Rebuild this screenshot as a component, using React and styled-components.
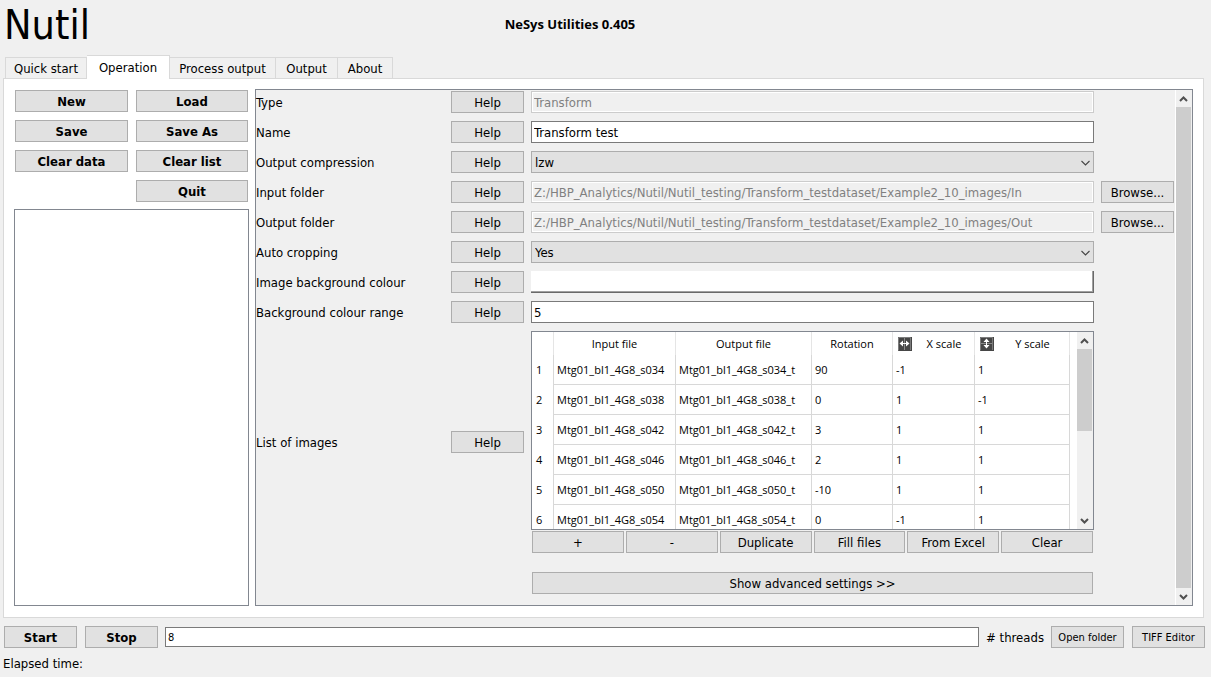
import React from "react";
import styled, { createGlobalStyle, css } from "styled-components";

const ui = `"DejaVu Sans Condensed", "DejaVu Sans", sans-serif`;
const humanist = `"Open Sans", "Noto Sans", sans-serif`;

const GlobalStyle = createGlobalStyle`
  * { box-sizing: border-box; }
  body {
    margin: 0;
    background: #f0f0f0;
    color: #000;
    font: 13px/16px ${ui};
  }
  button, input, select { font: inherit; color: inherit; margin: 0; border-radius: 0; }
`;

const Page = styled.div`
  display: flex;
  flex-direction: column;
  min-height: 100vh;
`;

const Header = styled.header`
  display: grid;
  grid-template-columns: 1fr auto 1fr;
  height: 55px;
  padding: 0 75px 0 4px;
`;

const Brand = styled.h1`
  margin: 0;
  font-size: 41px;
  line-height: 50px;
  font-weight: 400;
`;

const Title = styled.h2`
  margin: 0;
  padding-top: 16px;
  font-family: ${humanist};
  font-size: 13px;
  line-height: 16px;
  font-weight: 700;
`;

const TabBar = styled.nav`
  display: flex;
  align-items: flex-end;
  height: 24px;
  margin-bottom: -1px;
  padding-left: 5px;
  position: relative;
`;

const Tab = styled.button`
  height: 22px;
  width: ${(p) => p.$width}px;
  padding: 2px 0 0;
  border: 1px solid #d9d9d9;
  border-left-width: ${(p) => (p.$first ? 1 : 0)}px;
  background: #f0f0f0;
  ${(p) =>
    p.$active &&
    css`
      height: 24px;
      padding: 0;
      border-bottom: 0;
      background: #fff;
    `}
`;

const Panel = styled.main`
  flex: 1;
  display: flex;
  gap: 6px;
  margin: 0 7px 0 3px;
  padding: 10px 10px 11px;
  border: 1px solid #d9d9d9;
  background: #fff;
`;

const Side = styled.section`
  display: flex;
  flex-direction: column;
  gap: 7px;
  width: 235px;
`;

const ButtonGrid = styled.div`
  display: grid;
  grid-template-columns: 113px 112px;
  gap: 8px;
  padding: 1px 1px 0;
`;

const Button = styled.button`
  height: 22px;
  min-width: 0;
  padding: 2px 0 0;
  border: 1px solid #adadad;
  background: #e1e1e1;
  line-height: 16px;
  font-weight: ${(p) => (p.$bold ? 700 : 400)};
  font-size: ${(p) => (p.$small ? 11 : 13)}px;
  ${(p) => p.$last && "grid-column: 2;"}
`;

const FileList = styled.div`
  flex: 1;
  border: 1px solid #828790;
  background: #fff;
`;

const FormFrame = styled.section`
  flex: 1;
  min-width: 0;
  display: flex;
  border: 1px solid #828790;
  background: #f0f0f0;
`;

const Form = styled.form`
  flex: 1;
  min-width: 0;
  display: flex;
  flex-direction: column;
  gap: 8px;
  padding: 1px 1px 11px 0;
`;

const Row = styled.div`
  display: grid;
  grid-template-columns: 188px 73px minmax(0, 1fr) 73px;
  column-gap: 7px;
  align-items: center;
`;

const label = css`
  padding-top: 2px;
`;

const Label = styled.label`
  ${label}
`;

const Caption = styled.span`
  ${label}
`;

const TextBox = styled.input`
  width: 100%;
  height: 22px;
  padding: 0 2px;
  border: 1px solid #7a7a7a;
  background: #fff;
  outline: 0;
  &:disabled {
    border-color: #ccc;
    background: #f0f0f0;
    box-shadow: inset 0 0 0 1px #fff;
    color: #808080;
  }
`;

const SelectWrap = styled.div`
  position: relative;
  svg { position: absolute; right: 4px; top: 9px; pointer-events: none; }
`;

const Select = styled.select`
  display: block;
  appearance: none;
  width: 100%;
  height: 22px;
  padding: 2px 20px 0 3px;
  border: 1px solid #adadad;
  background: #e1e1e1;
`;

const ColourButton = styled.button`
  width: 100%;
  height: 22px;
  padding: 0;
  background: #fff;
  border: 0;
  border-right: 1px solid #696969;
  border-bottom: 1px solid #696969;
  box-shadow: inset -1px -1px 0 #a0a0a0;
`;

const ListField = styled.div`
  display: flex;
  flex-direction: column;
  gap: 1px;
`;

const TableFrame = styled.div`
  display: flex;
  height: 199px;
  border: 1px solid #828790;
  background: #fff;
  font-family: ${humanist};
  font-size: 11px;
`;

const TableView = styled.div`
  flex: 1;
  min-width: 0;
  overflow: hidden;
  padding-right: 7px;
`;

const Table = styled.table`
  width: 100%;
  table-layout: fixed;
  border-collapse: separate;
  border-spacing: 0;
`;

const HeadCell = styled.th`
  height: 23px;
  padding: 0;
  border-right: 1px solid #e5e5e5;
  font-weight: 400;
`;

const HeadWithIcon = styled.div`
  display: flex;
  align-items: center;
  padding-left: 5px;
  span { flex: 1; padding-left: 2px; }
`;

const RowHead = styled.th`
  height: 30px;
  padding: 0 0 0 4px;
  border-right: 1px solid #d8d8d8;
  font-weight: 400;
  text-align: left;
`;

const Cell = styled.td`
  height: 30px;
  padding: 0 0 0 3px;
  border-right: 1px solid #d8d8d8;
  border-bottom: 1px solid #d8d8d8;
  white-space: nowrap;
`;

const Track = styled.div`
  display: flex;
  flex-direction: column;
  width: ${(p) => (p.$framed ? 17 : 16)}px;
  padding-right: 1px;
  border-left: ${(p) => (p.$framed ? 1 : 0)}px solid #fff;
  background: #f0f0f0;
`;

const Arrow = styled.button`
  display: flex;
  align-items: center;
  justify-content: center;
  height: 17px;
  padding: 0;
  border: 0;
  background: none;
`;

const Thumb = styled.div`
  background: #cdcdcd;
  ${(p) => (p.$length ? `height: ${p.$length}px; margin-bottom: auto;` : "flex: 1;")}
`;

const Actions = styled.div`
  display: grid;
  grid-template-columns: repeat(6, 1fr);
  gap: 2px;
  padding: 0 1px;
`;

const Advanced = styled.div`
  display: grid;
  padding: 11px 1px 0;
  grid-column: 3;
`;

const Footer = styled.footer`
  display: flex;
  align-items: center;
  gap: 7px;
  padding: 8px 6px 0 4px;
`;

const Pair = styled.div`
  display: grid;
  grid-template-columns: 73px 73px;
  gap: 8px;
`;

const Threads = styled(TextBox)`
  flex: 1;
  width: auto;
  height: 20px;
  font-size: 11px;
`;

const Elapsed = styled.p`
  margin: 0;
  padding: 8px 3px 5px;
`;

const Chevron = ({ up, bold }) => (
  <svg width="9" height="6" viewBox="0 0 9 6" fill="none" stroke={bold ? "#505050" : "#444"} strokeWidth={bold ? 2 : 1.1} aria-hidden="true">
    <path d={up ? "M1 5 L4.5 1.5 L8 5" : bold ? "M1 1 L4.5 4.5 L8 1" : "M0.5 1 L4.5 5 L8.5 1"} />
  </svg>
);

const ScaleIcon = ({ vertical }) => (
  <svg width="14" height="14" viewBox="0 0 14 14" aria-hidden="true">
    <rect width="14" height="14" fill="#464646" />
    <path d="M0.5 13.5V0.5H12.5V13" fill="none" stroke="#7c7c7c" />
    <path d={vertical ? "M1 6.5H12" : "M6.5 1V13"} stroke="#8a8a8a" />
    <g transform={vertical ? "rotate(90 6.5 6.5)" : undefined} fill="#fff">
      <path d="M3 6H10V7H3Z" />
      <path d="M1.5 6.5L5 3.5V9.5Z M11.5 6.5L8 3.5V9.5Z" />
    </g>
  </svg>
);

const Scrollbar = ({ framed, length }) => (
  <Track $framed={framed}>
    <Arrow type="button" aria-label="Scroll up"><Chevron up bold /></Arrow>
    <Thumb $length={length} />
    <Arrow type="button" aria-label="Scroll down"><Chevron bold /></Arrow>
  </Track>
);

const Field = ({ id, label, browse, children }) => (
  <Row>
    <Label htmlFor={id}>{label}</Label>
    <Button type="button">Help</Button>
    {children}
    {browse && <Button type="button">Browse...</Button>}
  </Row>
);

const DropDown = ({ id, value }) => (
  <SelectWrap>
    <Select id={id} defaultValue={value}>
      <option>{value}</option>
    </Select>
    <Chevron />
  </SelectWrap>
);

const tabs = [
  ["Quick start", 82],
  ["Operation", 83],
  ["Process output", 106],
  ["Output", 62],
  ["About", 55],
];

const images = [
  ["034", 90, -1, 1],
  ["038", 0, 1, -1],
  ["042", 3, 1, 1],
  ["046", 2, 1, 1],
  ["050", -10, 1, 1],
  ["054", 0, -1, 1],
];

const folder = "Z:/HBP_Analytics/Nutil/Nutil_testing/Transform_testdataset/Example2_10_images/";

export default function App() {
  return (
    <Page>
      <GlobalStyle />
      <Header>
        <Brand>Nutil</Brand>
        <Title>NeSys Utilities 0.405</Title>
      </Header>
      <TabBar>
        {tabs.map(([name, width], i) => (
          <Tab key={name} type="button" $width={width} $first={i === 0} $active={name === "Operation"}>
            {name}
          </Tab>
        ))}
      </TabBar>
      <Panel>
        <Side>
          <ButtonGrid>
            {["New", "Load", "Save", "Save As", "Clear data", "Clear list", "Quit"].map((name) => (
              <Button key={name} type="button" $bold $last={name === "Quit"}>{name}</Button>
            ))}
          </ButtonGrid>
          <FileList />
        </Side>
        <FormFrame>
          <Form>
            <Field id="type" label="Type">
              <TextBox id="type" defaultValue="Transform" disabled />
            </Field>
            <Field id="name" label="Name">
              <TextBox id="name" defaultValue="Transform test" />
            </Field>
            <Field id="compression" label="Output compression">
              <DropDown id="compression" value="lzw" />
            </Field>
            <Field id="input" label="Input folder" browse>
              <TextBox id="input" defaultValue={folder + "In"} disabled />
            </Field>
            <Field id="output" label="Output folder" browse>
              <TextBox id="output" defaultValue={folder + "Out"} disabled />
            </Field>
            <Field id="cropping" label="Auto cropping">
              <DropDown id="cropping" value="Yes" />
            </Field>
            <Field id="colour" label="Image background colour">
              <ColourButton id="colour" type="button" />
            </Field>
            <Field id="range" label="Background colour range">
              <TextBox id="range" defaultValue="5" />
            </Field>
            <Row>
              <Caption>List of images</Caption>
              <Button type="button">Help</Button>
              <ListField>
                <TableFrame>
                  <TableView>
                    <Table aria-label="List of images">
                      <colgroup>
                        {[22, 122, 136, 81, 82, 95].map((w) => <col key={w} width={w} />)}
                      </colgroup>
                      <thead>
                        <tr>
                          <HeadCell />
                          <HeadCell>Input file</HeadCell>
                          <HeadCell>Output file</HeadCell>
                          <HeadCell>Rotation</HeadCell>
                          <HeadCell><HeadWithIcon><ScaleIcon /><span>X scale</span></HeadWithIcon></HeadCell>
                          <HeadCell><HeadWithIcon><ScaleIcon vertical /><span>Y scale</span></HeadWithIcon></HeadCell>
                        </tr>
                      </thead>
                      <tbody>
                        {images.map(([n, rotation, x, y], i) => (
                          <tr key={n}>
                            <RowHead scope="row">{i + 1}</RowHead>
                            <Cell>Mtg01_bl1_4G8_s{n}</Cell>
                            <Cell>Mtg01_bl1_4G8_s{n}_t</Cell>
                            <Cell>{rotation}</Cell>
                            <Cell>{x}</Cell>
                            <Cell>{y}</Cell>
                          </tr>
                        ))}
                      </tbody>
                    </Table>
                  </TableView>
                  <Scrollbar length={82} />
                </TableFrame>
                <Actions>
                  {["+", "-", "Duplicate", "Fill files", "From Excel", "Clear"].map((name) => (
                    <Button key={name} type="button">{name}</Button>
                  ))}
                </Actions>
              </ListField>
            </Row>
            <Row>
              <Advanced>
                <Button type="button">Show advanced settings &gt;&gt;</Button>
              </Advanced>
            </Row>
          </Form>
          <Scrollbar framed />
        </FormFrame>
      </Panel>
      <Footer>
        <Pair>
          <Button type="button" $bold>Start</Button>
          <Button type="button" $bold>Stop</Button>
        </Pair>
        <Threads id="threads" defaultValue="8" />
        <Label htmlFor="threads"># threads</Label>
        <Pair>
          <Button type="button" $small>Open folder</Button>
          <Button type="button" $small>TIFF Editor</Button>
        </Pair>
      </Footer>
      <Elapsed>Elapsed time:</Elapsed>
    </Page>
  );
}
